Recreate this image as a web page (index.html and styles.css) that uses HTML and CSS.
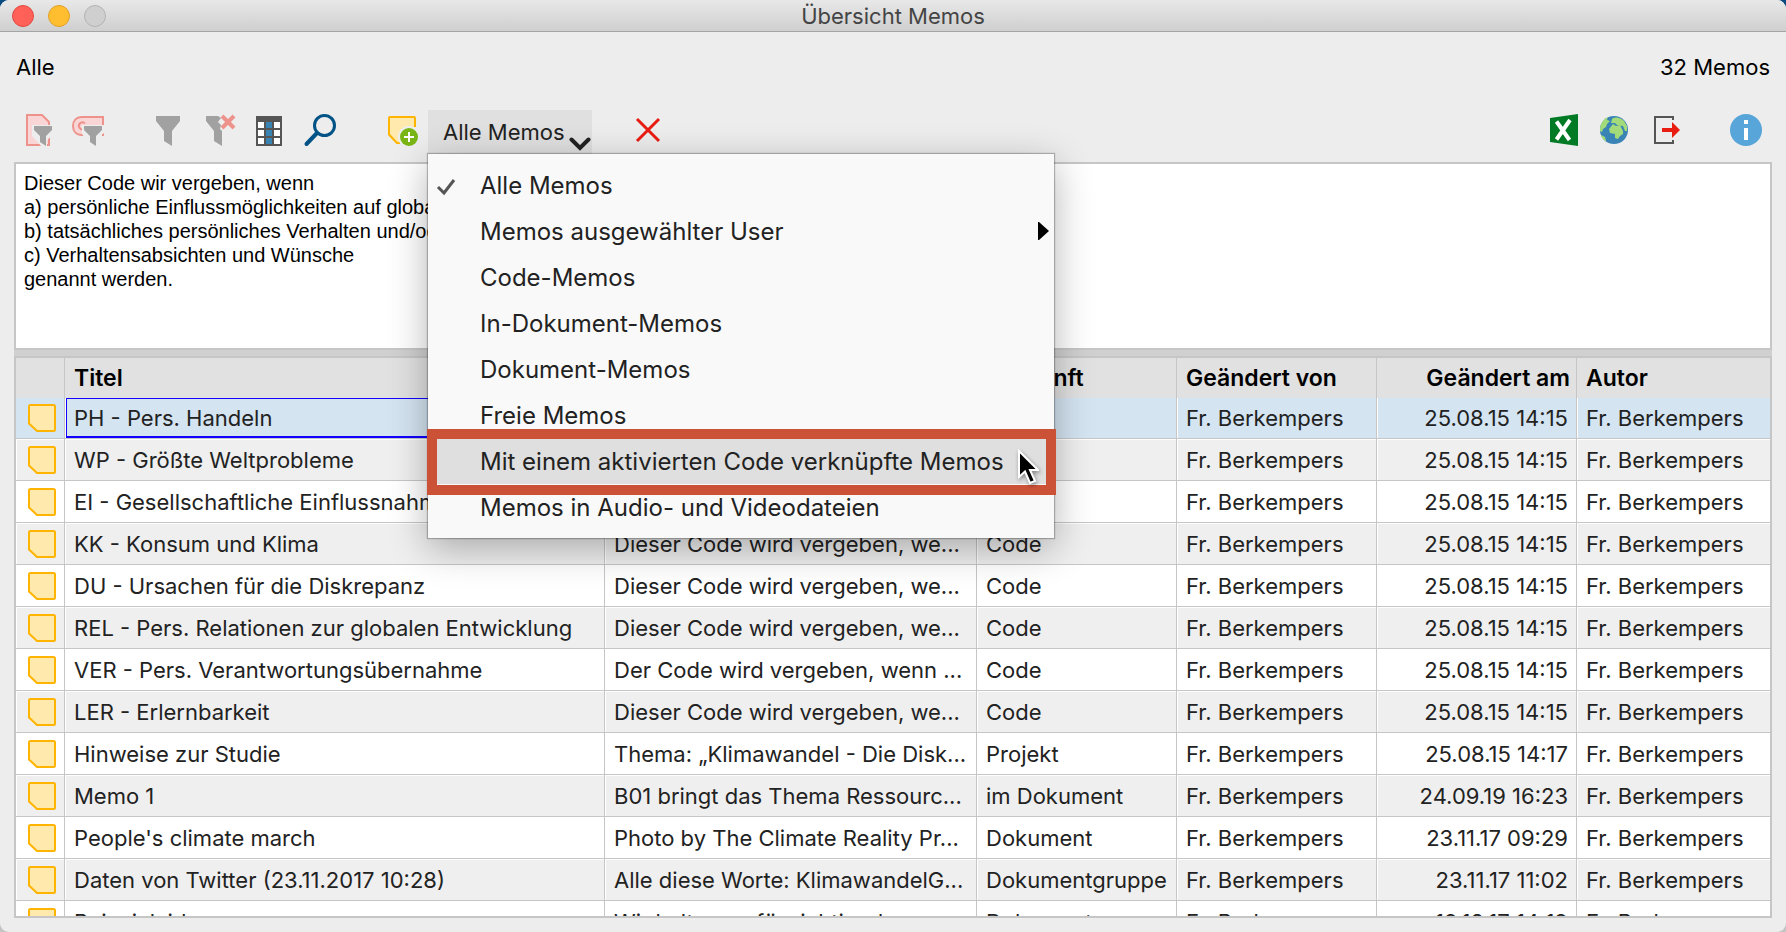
FILE: index.html
```html
<!DOCTYPE html>
<html lang="de">
<head>
<meta charset="utf-8">
<title>Übersicht Memos</title>
<link rel="stylesheet" href="styles.css">
</head>
<body>
<svg class="sprite" aria-hidden="true">
  <symbol id="memo" viewBox="0 0 28 28"><path d="M2.500 1H25.500Q27 1 27 2.500V25.500Q27 27 25.500 27H9L1 19.500V2.500Q1 1 2.500 1Z" fill="#ffe9ac" stroke="#ffb400" stroke-width="2"/></symbol>
</svg>
<main class="window">
  <header class="titlebar">
    <div class="lights">
      <button class="light close" aria-label="Schließen"></button>
      <button class="light minimize" aria-label="Minimieren"></button>
      <button class="light zoom" aria-label="Zoomen" disabled></button>
    </div>
    <h1 class="title">Übersicht Memos</h1>
  </header>

  <div class="summary"><span>Alle</span><span>32 Memos</span></div>

  <div class="toolbar">
    <div class="group">
      <button class="tool" aria-label="Aktivierte Dokumente"><svg viewBox="0 0 32 32"><path d="M5 1H20L27 8V31H5Z" fill="#f9d6d5" stroke="#ee928c" stroke-width="2"/><path d="M10 11H32V20L25 26V33H20L10 22Z" fill="#ededed"/><path d="M12 12H30V16L24 22V32L18 28V22L12 16Z" fill="#a1a1a1"/></svg></button>
      <button class="tool" aria-label="Aktivierte Codes"><svg viewBox="0 0 32 32"><path d="M31 3H10C4 3 1 7 1 12S4 21 10 21H31Z" fill="#f9d6d5"/><path d="M31 21V3H10C4 3 1 7 1 12S4 21 10 21H12M13 9.500A3.500 3.500 0 1 0 12 15" fill="none" stroke="#ee928c" stroke-width="2"/><path d="M10 11H32V19L25 25V33H20L10 20Z" fill="#ededed"/><path d="M12 12H30V16L24 22V32L18 28V22L12 16Z" fill="#a1a1a1"/><path d="M30 20h2v2h-2z" fill="#ee928c"/></svg></button>
    </div>
    <div class="group">
      <button class="tool" aria-label="Filter"><svg viewBox="0 0 32 32"><path d="M4 2H28V7L20 17V32L12 27V17L4 7Z" fill="#a1a1a1"/></svg></button>
      <button class="tool" aria-label="Filter zurücksetzen"><svg viewBox="0 0 32 32"><path d="M4 2H16L19 4L16 8L19 11L18 15L20 17V32L12 27V17L4 7Z" fill="#a1a1a1"/><path d="M20 2L32 14M32 2L20 14" stroke="#ee928c" stroke-width="4"/></svg></button>
      <button class="tool" aria-label="Spalten"><svg viewBox="0 0 32 32"><path d="M4 2H30V32H4Z" fill="#555"/><path d="M6 8h6v6H6zM6 16h6v6H6zM6 24h6v6H6zM22 8h6v6h-6zM22 16h6v6h-6zM22 24h6v6h-6z" fill="#fff"/><path d="M14 8h6v6h-6zM14 16h6v6h-6zM14 24h6v6h-6z" fill="#3983b5"/></svg></button>
      <button class="tool" aria-label="Suchen"><svg viewBox="0 0 32 32"><path d="M15 19L4.500 30" stroke="#005287" stroke-width="4" stroke-linecap="round"/><circle cx="22.500" cy="11.500" r="10" fill="none" stroke="#005287" stroke-width="3"/></svg></button>
    </div>
    <div class="group group-memos">
      <button class="tool" aria-label="Neues Memo"><svg viewBox="0 0 32 32"><path d="M2.500 3H28.500Q29 3 29 4V22L22 29H12L3 20.500V4Q3 3 4 3Z" fill="#ffe9ac"/><path d="M29 13V4Q29 3 28 3H4Q3 3 3 4V20.500L11 29H14" fill="none" stroke="#ffb400" stroke-width="2"/><circle cx="23" cy="23" r="11" fill="#ededed"/><circle cx="23" cy="23" r="9" fill="#7ab516"/><path d="M23 18V28M18 23H28" stroke="#fff" stroke-width="2"/></svg></button>
      <div class="dropdown">
        <button class="dropdown-button" aria-haspopup="menu" aria-expanded="true">Alle Memos<svg class="chevron" viewBox="0 0 22 14"><path d="M2.500 2.500L11 11L19.500 2.500" fill="none" stroke="#222" stroke-width="4" stroke-linecap="round" stroke-linejoin="miter"/></svg></button>
        <div class="menu" role="menu">
          <button class="item" role="menuitem"><svg class="check" viewBox="0 0 20 18"><path d="M2 9L8 15L18 2" fill="none" stroke="#555" stroke-width="3"/></svg>Alle Memos</button>
          <button class="item" role="menuitem">Memos ausgewählter User<svg class="submenu" viewBox="0 0 11 18"><path d="M0 0H1L11 9L1 18H0Z"/></svg></button>
          <button class="item" role="menuitem">Code-Memos</button>
          <button class="item" role="menuitem">In-Dokument-Memos</button>
          <button class="item" role="menuitem">Dokument-Memos</button>
          <button class="item" role="menuitem">Freie Memos</button>
          <button class="item active" role="menuitem">Mit einem aktivierten Code verknüpfte Memos<svg class="pointer" viewBox="0 0 22 36"><path d="M2 2V28L8 22.500L13 34L18 32L13 21H21Z" fill="#000" stroke="#fff" stroke-width="2"/></svg></button>
          <button class="item" role="menuitem">Memos in Audio- und Videodateien</button>
        </div>
      </div>
    </div>
    <button class="tool delete" aria-label="Löschen"><svg viewBox="0 0 32 32"><path d="M5 5L27 27M27 5L5 27" stroke="#e91c12" stroke-width="3"/></svg></button>
    <div class="group group-export">
      <button class="tool" aria-label="Als Excel öffnen"><svg viewBox="0 0 32 32"><path d="M2 4L30 0V32L2 28Z" fill="#007a24"/><path d="M8.500 7.500L21.500 26M22 6L8.500 25.500" stroke="#fff" stroke-width="4"/></svg></button>
      <button class="tool" aria-label="Als Webseite öffnen"><svg viewBox="0 0 32 32"><circle cx="16" cy="16" r="14" fill="#3983b5"/><path d="M2 17C2 10 5 5 10 3L9 6L12 7L9 10L8 13L5 15L4 18ZM3 21L7 23L8 27L7 27C5 25 3 23 3 21ZM14 5C18 2 23 4 26 7L29 12V17L27 17L25 12L19 11L17 9L13 9ZM11 15L15 10L18 12L22 11L25 17V20L22 22L20 25L17 24V20L12 19Z" fill="#a3db7b"/></svg></button>
      <button class="tool" aria-label="Exportieren"><svg viewBox="0 0 32 32"><path d="M25 6V3H7V29H25V26" fill="none" stroke="#555" stroke-width="2"/><path d="M14 14H24V8L32 16L24 24V18H14Z" fill="#e91c12"/></svg></button>
    </div>
    <button class="tool info" aria-label="Information"><svg viewBox="0 0 32 32"><circle cx="16" cy="16" r="16" fill="#57a5d9"/><path d="M14 6h4v4h-4zM14 14h4v12h-4z" fill="#fff"/></svg></button>
  </div>

  <section class="content">
    <textarea class="preview" aria-label="Memotext" spellcheck="false">Dieser Code wir vergeben, wenn
a) persönliche Einflussmöglichkeiten auf globale Entwicklung
b) tatsächliches persönliches Verhalten und/oder
c) Verhaltensabsichten und Wünsche
genannt werden.</textarea>
    <div class="splitter"></div>
    <div class="grid">
      <table class="memos">
        <colgroup><col class="c-icon"><col class="c-title"><col class="c-preview"><col class="c-std"><col class="c-std"><col class="c-std"><col></colgroup>
        <thead><tr><th></th><th>Titel</th><th>Vorschau</th><th>Herkunft</th><th>Geändert von</th><th class="date">Geändert am</th><th>Autor</th></tr></thead>
        <tbody>
          <tr class="selected"><td><svg class="memo"><use href="#memo"/></svg></td><td>PH - Pers. Handeln</td><td>Dieser Code wir vergeben, wen...</td><td>Code</td><td>Fr. Berkempers</td><td class="date">25.08.15 14:15</td><td>Fr. Berkempers</td></tr>
          <tr><td><svg class="memo"><use href="#memo"/></svg></td><td>WP - Größte Weltprobleme</td><td>Dieser Code wird vergeben, we...</td><td>Code</td><td>Fr. Berkempers</td><td class="date">25.08.15 14:15</td><td>Fr. Berkempers</td></tr>
          <tr><td><svg class="memo"><use href="#memo"/></svg></td><td>EI - Gesellschaftliche Einflussnahme</td><td>Dieser Code wird vergeben, we...</td><td>Code</td><td>Fr. Berkempers</td><td class="date">25.08.15 14:15</td><td>Fr. Berkempers</td></tr>
          <tr><td><svg class="memo"><use href="#memo"/></svg></td><td>KK - Konsum und Klima</td><td>Dieser Code wird vergeben, we...</td><td>Code</td><td>Fr. Berkempers</td><td class="date">25.08.15 14:15</td><td>Fr. Berkempers</td></tr>
          <tr><td><svg class="memo"><use href="#memo"/></svg></td><td>DU - Ursachen für die Diskrepanz</td><td>Dieser Code wird vergeben, we...</td><td>Code</td><td>Fr. Berkempers</td><td class="date">25.08.15 14:15</td><td>Fr. Berkempers</td></tr>
          <tr><td><svg class="memo"><use href="#memo"/></svg></td><td>REL - Pers. Relationen zur globalen Entwicklung</td><td>Dieser Code wird vergeben, we...</td><td>Code</td><td>Fr. Berkempers</td><td class="date">25.08.15 14:15</td><td>Fr. Berkempers</td></tr>
          <tr><td><svg class="memo"><use href="#memo"/></svg></td><td>VER - Pers. Verantwortungsübernahme</td><td>Der Code wird vergeben, wenn ...</td><td>Code</td><td>Fr. Berkempers</td><td class="date">25.08.15 14:15</td><td>Fr. Berkempers</td></tr>
          <tr><td><svg class="memo"><use href="#memo"/></svg></td><td>LER - Erlernbarkeit</td><td>Dieser Code wird vergeben, we...</td><td>Code</td><td>Fr. Berkempers</td><td class="date">25.08.15 14:15</td><td>Fr. Berkempers</td></tr>
          <tr><td><svg class="memo"><use href="#memo"/></svg></td><td>Hinweise zur Studie</td><td>Thema: „Klimawandel - Die Disk...</td><td>Projekt</td><td>Fr. Berkempers</td><td class="date">25.08.15 14:17</td><td>Fr. Berkempers</td></tr>
          <tr><td><svg class="memo"><use href="#memo"/></svg></td><td>Memo 1</td><td>B01 bringt das Thema Ressourc...</td><td>im Dokument</td><td>Fr. Berkempers</td><td class="date">24.09.19 16:23</td><td>Fr. Berkempers</td></tr>
          <tr><td><svg class="memo"><use href="#memo"/></svg></td><td>People's climate march</td><td>Photo by The Climate Reality Pr...</td><td>Dokument</td><td>Fr. Berkempers</td><td class="date">23.11.17 09:29</td><td>Fr. Berkempers</td></tr>
          <tr><td><svg class="memo"><use href="#memo"/></svg></td><td>Daten von Twitter (23.11.2017 10:28)</td><td>Alle diese Worte: KlimawandelG...</td><td>Dokumentgruppe</td><td>Fr. Berkempers</td><td class="date">23.11.17 11:02</td><td>Fr. Berkempers</td></tr>
          <tr><td><svg class="memo"><use href="#memo"/></svg></td><td>Beispielvideo</td><td>Wir halten es für richtig, da...</td><td>Dokument</td><td>Fr. Berkempers</td><td class="date">19.12.17 14:19</td><td>Fr. Berkempers</td></tr>
        </tbody>
      </table>
    </div>
  </section>
</main>
</body>
</html>
```
FILE: styles.css
```css
* { box-sizing: border-box; }

body {
  margin: 0;
  background: linear-gradient(#0b4a80 50%, #c4c4c4 50%);
  font-family: Inter, "Noto Sans", sans-serif;
  font-size: 22px;
  color: #222;
}

button {
  border: 0;
  padding: 0;
  background: none;
  font: inherit;
  color: inherit;
}

.sprite { display: none; }

.window {
  display: flex;
  flex-direction: column;
  height: 100vh;
  border-radius: 9px;
  background: #ededed;
  overflow: hidden;
}

/* Title bar */
.titlebar {
  display: grid;
  grid-template-columns: 1fr auto 1fr;
  align-items: center;
  height: 32px;
  padding: 0 12px;
  background: linear-gradient(#e8e8e8, #cfcfcf);
  border-bottom: 1px solid #a5a5a5;
}
.lights { display: flex; gap: 14px; }
.light { width: 22px; height: 22px; border-radius: 50%; border: 1px solid; }
.close { background: #ff6058; border-color: #e24840; }
.minimize { background: #ffbd30; border-color: #e0a028; }
.light.zoom { background: #cfcfcf; border-color: #b3b3b3; }
.title { margin: 0; font-size: 22px; font-weight: 400; line-height: 32px; color: #444; }

.summary {
  display: flex;
  justify-content: space-between;
  padding: 0 16px;
  line-height: 70px;
  color: #000;
}

/* Toolbar */
.toolbar {
  display: flex;
  align-items: flex-start;
  padding: 8px 24px 8px 22px;
}
.group { display: flex; gap: 18px; margin-right: 48px; }
.group-memos { gap: 10px; margin: 0 40px 0 4px; }
.tool { display: flex; align-items: center; width: 32px; height: 40px; }
.tool svg { width: 32px; height: 32px; overflow: visible; }
.group-export { margin: 0 50px 0 auto; }

.dropdown { position: relative; }
.dropdown-button {
  display: flex;
  align-items: center;
  justify-content: space-between;
  width: 164px;
  height: 44px;
  padding: 0 1px 0 15px;
  background: #e0e0e0;
}
.chevron { width: 22px; height: 14px; margin-top: 24px; }

.menu {
  position: absolute;
  z-index: 2;
  top: 44px;
  left: 0;
  width: 626px;
  padding: 8px 0;
  background: #f9f9f9;
  box-shadow: 0 0 1px 1px rgba(0, 0, 0, .25), 0 10px 36px rgba(0, 0, 0, .3);
  font-size: 24px;
}
.item {
  position: relative;
  display: block;
  width: 100%;
  height: 46px;
  padding-left: 52px;
  text-align: left;
  white-space: nowrap;
}
.check { position: absolute; left: 8px; top: 16px; width: 20px; height: 18px; }
.submenu { position: absolute; right: 5px; top: 14px; width: 11px; height: 18px; }
.item.active { z-index: 1; background: #dfdfdf; }
.item.active::before {
  content: "";
  position: absolute;
  inset: -9px -2px -11px -1px;
  border: 10px solid #cc5237;
}
.pointer {
  position: absolute;
  right: 15px;
  top: 11px;
  width: 22px;
  height: 36px;
  filter: drop-shadow(1px 2px 2px rgba(0, 0, 0, .4));
}

/* Memo text and table */
.content {
  display: flex;
  flex: 1;
  flex-direction: column;
  min-height: 0;
  margin: 0 14px 14px;
}
.preview {
  height: 188px;
  margin: 0;
  padding: 7px 8px;
  border: 2px solid #c6c6c6;
  border-radius: 0;
  outline: 0;
  resize: none;
  background: #fff;
  font: 20px/24px "Liberation Sans", Arial, sans-serif;
  color: #000;
}
.splitter { height: 6px; background: #d0d0d0; }
.grid {
  flex: 1;
  min-height: 0;
  border: 2px solid #c6c6c6;
  background: #fff;
  overflow: hidden;
}
.memos {
  width: 100%;
  table-layout: fixed;
  border-collapse: separate;
  border-spacing: 0;
}
.c-icon { width: 49px; }
.c-title { width: 540px; }
.c-preview { width: 372px; }
.c-std { width: 200px; }
.memos th, .memos td {
  height: 42px;
  padding: 0 8px 0 9px;
  border-right: 1px solid #c6c6c6;
  text-align: left;
  line-height: 30px;
  white-space: nowrap;
}
.memos th {
  height: 40px;
  padding-right: 6px;
  background: #e1e1e1;
  font-size: 23px;
  font-weight: 600;
  color: #000;
}
.memos td { border-bottom: 1px solid #c6c6c6; }
.memos th:last-child, .memos td:last-child { border-right: 0; }
.memos tr:nth-child(even) td { background: #efefef; box-shadow: inset 1px 1px #fff; }
.memos .selected td { height: 41px; background: #d4e4f1; box-shadow: inset 1px 0 #fff; }
.memos .selected td:first-child { box-shadow: none; }
.memos .selected td:nth-child(2) {
  box-shadow: inset 1px 0 #fff, inset 2px 1px #10f, inset -1px -2px #10f;
}
.memos .date { text-align: right; }
.memos td:first-child { padding: 0 8px 0 12px; }
.memo { display: block; width: 28px; height: 28px; }
```
